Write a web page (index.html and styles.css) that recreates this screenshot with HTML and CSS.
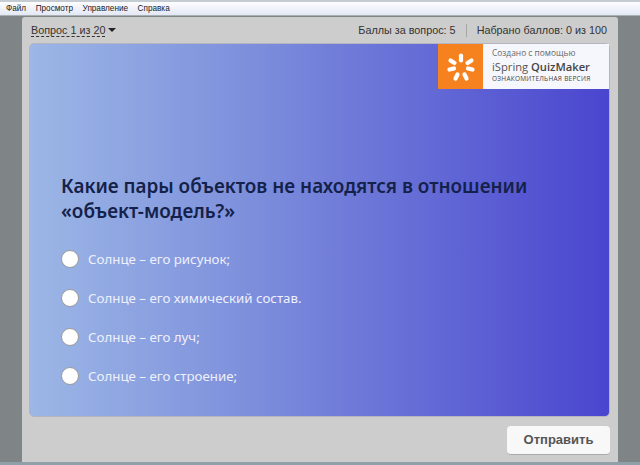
FILE: index.html
```html
<!DOCTYPE html>
<html>
<head>
    <title>Quiz</title>
    <link rel="stylesheet" href="styles.css">
</head>
<body>
    <div class="menubar">
        <span>Файл</span>
        <span>Просмотр</span>
        <span>Управление</span>
        <span>Справка</span>
    </div>
    <div class="player">
        <div class="topbar">
            <div class="question-select">
                <span class="question-num">Вопрос 1 из 20</span>
                <span class="arrow"></span>
            </div>
            <div class="score">
                <span>Баллы за вопрос: 5</span>
                <span class="divider"></span>
                <span>Набрано баллов: 0 из 100</span>
            </div>
        </div>
        <div class="slide">
            <div class="badge">
                <div class="badge-logo">
                    <svg width="30" height="30" viewBox="0 0 30 30">
                        <g fill="none" stroke="#fff" stroke-width="4.2" stroke-linecap="round">
                            <path d="M15 3.5V8.5"/>
                            <path d="M25.5 8.5L21.5 11"/>
                            <path d="M26.5 17.5L22 16.5"/>
                            <path d="M20.5 26.5L18.5 22.5"/>
                            <path d="M9.5 26.5L11.5 22.5"/>
                            <path d="M3.5 17.5L8 16.5"/>
                            <path d="M4.5 8.5L8.5 11"/>
                        </g>
                    </svg>
                </div>
                <div class="badge-text">
                    <div class="badge-line1">Создано с помощью</div>
                    <div class="badge-line2">iSpring <b>QuizMaker</b></div>
                    <div class="badge-line3">ОЗНАКОМИТЕЛЬНАЯ ВЕРСИЯ</div>
                </div>
            </div>
            <h1>Какие пары объектов не находятся в отношении<br>«объект-модель?»</h1>
            <div class="answers">
                <div class="answer"><span class="radio"></span>Солнце – его рисунок;</div>
                <div class="answer"><span class="radio"></span>Солнце – его химический состав.</div>
                <div class="answer"><span class="radio"></span>Солнце – его луч;</div>
                <div class="answer"><span class="radio"></span>Солнце – его строение;</div>
            </div>
        </div>
        <div class="bottombar">
            <button class="submit">Отправить</button>
        </div>
    </div>
</body>
</html>
```

FILE: styles.css
```css
html, body {
    height: 100%;
}

body {
    margin: 0;
    overflow: hidden;
    background-color: #7f8486;
    font-family: "Liberation Sans", sans-serif;
    display: flex;
    flex-direction: column;
    border-bottom: 3px solid #8fa0a8;
    box-sizing: border-box;
}

.menubar {
    height: 16px;
    box-sizing: border-box;
    padding: 2px 0 0 6px;
    display: flex;
    gap: 9.5px;
    background: linear-gradient(#fdfdff, #e3e8f4);
    border-top: 2px solid #c4ccd2;
    border-bottom: 1px solid #a9b0b4;
    font-size: 8.2px;
    line-height: 10px;
    color: #222;
}

.player {
    margin: 1px 22px 0 22px;
    flex: 1;
    background-color: #cdcdcd;
    border-radius: 3px 3px 0 0;
    padding: 0 8px 0 7px;
    display: flex;
    flex-direction: column;
}

.topbar {
    height: 26px;
    flex: none;
    display: flex;
    justify-content: space-between;
    align-items: center;
    font-size: 10.8px;
    color: #333;
    padding: 0 3px 0 2px;
}

.question-select {
    display: flex;
    align-items: center;
    gap: 3px;
}

.question-num {
    border-bottom: 1px dashed #333;
    line-height: 12px;
}

.arrow {
    border-left: 4px solid transparent;
    border-right: 4px solid transparent;
    border-top: 4px solid #222;
}

.score {
    display: flex;
    align-items: center;
    gap: 10px;
}

.divider {
    width: 1px;
    height: 13px;
    background-color: #a5a5a5;
}

.slide {
    position: relative;
    height: 374px;
    flex: none;
    box-sizing: border-box;
    padding: 130px 31px 0;
    border-radius: 5px;
    border: 1px solid #b5b5c0;
    background: linear-gradient(90deg, #9cb7e6, #7d8fdc 38%, #4a45cf);
}

.badge {
    position: absolute;
    top: 0;
    right: 0;
    width: 171px;
    height: 45px;
    display: flex;
    background-color: #f6f7fc;
}

.badge-logo {
    width: 45px;
    background-color: #f5821f;
    display: flex;
    align-items: center;
    justify-content: center;
}

.badge-text {
    padding: 3px 0 0 9px;
    color: #555;
    font-family: "Open Sans", sans-serif;
}

.badge-line1 {
    font-size: 8.4px;
    line-height: 12px;
    color: #666;
}

.badge-line2 {
    font-size: 11.2px;
    line-height: 15px;
}

.badge-line2 b {
    font-weight: 600;
    color: #444;
}

.badge-line3 {
    font-size: 6.5px;
    line-height: 10px;
    color: #444;
    letter-spacing: 0.25px;
}

h1 {
    margin: 0;
    font-family: "Noto Sans", sans-serif;
    font-size: 18.9px;
    font-weight: 600;
    line-height: 25px;
    color: #14224a;
}

.answers {
    margin-top: 15px;
}

.answer {
    height: 39px;
    display: flex;
    align-items: center;
    gap: 9px;
    font-family: "Noto Sans", sans-serif;
    font-size: 13.3px;
    color: #eef0fb;
}

.radio {
    width: 16px;
    height: 16px;
    border-radius: 50%;
    background-color: #fff;
    border: 1px solid #999;
}

.bottombar {
    flex: 1;
    display: flex;
    justify-content: flex-end;
    align-items: center;
    padding-top: 1px;
}

.submit {
    width: 103px;
    height: 29px;
    padding: 0;
    border: none;
    border-radius: 4px;
    border-bottom: 1px solid #aaa;
    background-color: #f8f8f8;
    font-family: "Liberation Sans", sans-serif;
    font-size: 13px;
    font-weight: bold;
    color: #555;
}
```
